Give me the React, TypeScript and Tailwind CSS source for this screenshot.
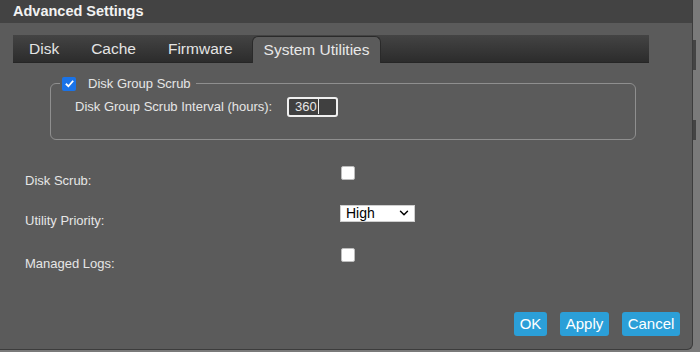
import { ChevronDown } from 'lucide-react';

const font = { fontFamily: '"Liberation Sans", Arial, sans-serif' };

const Checkbox = ({ checked = false }: { checked?: boolean }) =>
  checked ? (
    <span className="flex h-[14px] w-[14px] items-center justify-center rounded-[2px] bg-[#1a73e8]">
      <svg viewBox="0 0 12 12" className="h-[11px] w-[11px]">
        <path d="M2 6.3 L4.8 9 L10 3" fill="none" stroke="white" strokeWidth="2" />
      </svg>
    </span>
  ) : (
    <span className="block h-[14px] w-[14px] rounded-[2px] border border-[#bdbdbd] bg-white" />
  );

const tabs = ['Disk', 'Cache', 'Firmware'];

const buttons = [
  { label: 'OK', w: 'w-[33px]' },
  { label: 'Apply', w: 'w-[49px]' },
  { label: 'Cancel', w: 'w-[58px]' },
];

export default function App() {
  return (
    <div className="flex h-[352px] w-[700px] bg-[#7a7a7a]" style={font}>
      <div className="flex h-[350px] w-[693px] flex-col overflow-hidden rounded-br-[6px] border-r border-b border-[#3c3c3c] bg-[#5b5b5b]">
        <div className="h-[23px] shrink-0 bg-[#434343] pl-[13px] text-[14.5px] font-bold leading-[23px] text-[#f2f2f2]">
          Advanced Settings
        </div>

        <div className="mt-[12px] ml-[13px] flex h-[28px] w-[636px] shrink-0 items-end border-b border-[#262626] bg-gradient-to-b from-[#444] to-[#2c2c2c]">
          {tabs.map((t) => (
            <div key={t} className="flex h-full items-center px-[16px] text-[15.5px] text-[#e4e4e4]">
              {t}
            </div>
          ))}
          <div className="-mb-px ml-[3px] flex h-[27px] items-center rounded-t-[6px] border border-b-0 border-[#2a2a2a] bg-[#5b5b5b] px-[11px] text-[15.5px] text-[#e8e8e8]">
            System Utilities
          </div>
        </div>

        <fieldset className="mt-[11px] ml-[50px] w-[586px] rounded-[6px] border border-[#8f8f8f] px-[9px] pb-[22px]">
          <legend className="flex items-center px-[2px]">
            <Checkbox checked />
            <span className="ml-[12px] pr-[3px] text-[13px] text-[#e6e6e6]">Disk Group Scrub</span>
          </legend>
          <div className="mt-[3px] flex items-center pl-[15px]">
            <span className="w-[212px] text-[13px] text-[#e6e6e6]">Disk Group Scrub Interval (hours):</span>
            <div className="flex h-[20px] w-[51px] items-center rounded-[3px] border-2 border-[#f0f0f0] bg-[#404040] pl-[6px] text-[13px] text-[#e6e6e6]">
              360
              <span className="ml-px block h-[15px] w-px bg-[#f0f0f0]" />
            </div>
          </div>
        </fieldset>

        <div className="mt-[26px] flex flex-col pl-[25px] text-[13px] text-[#e6e6e6]">
          <div className="flex h-[39px] items-start">
            <span className="w-[316px] pt-[5px]">Disk Scrub:</span>
            <Checkbox />
          </div>
          <div className="flex h-[43px] items-start">
            <span className="w-[315px] pt-[6px]">Utility Priority:</span>
            <div className="flex h-[17px] w-[75px] items-center justify-between border border-[#cfcfcf] bg-white pr-[3px] pl-[5px] text-[14px] text-black">
              High
              <ChevronDown size={14} strokeWidth={2.5} />
            </div>
          </div>
          <div className="flex items-start">
            <span className="w-[316px] pt-[6px]">Managed Logs:</span>
            <Checkbox />
          </div>
        </div>

        <div className="mt-auto flex justify-end gap-[13px] pr-[12px] pb-[13px]">
          {buttons.map((b) => (
            <div
              key={b.label}
              className={`flex h-[24px] items-center justify-center rounded-[3px] bg-[#2b9fd8] text-[15px] text-white ${b.w}`}
            >
              {b.label}
            </div>
          ))}
        </div>
      </div>
      <div className="flex flex-1 flex-col">
        <div className="mt-[40px] h-[30px] w-[3px] bg-[#444]" />
        <div className="mt-[50px] h-[20px] w-[3px] bg-[#444]" />
      </div>
    </div>
  );
}
